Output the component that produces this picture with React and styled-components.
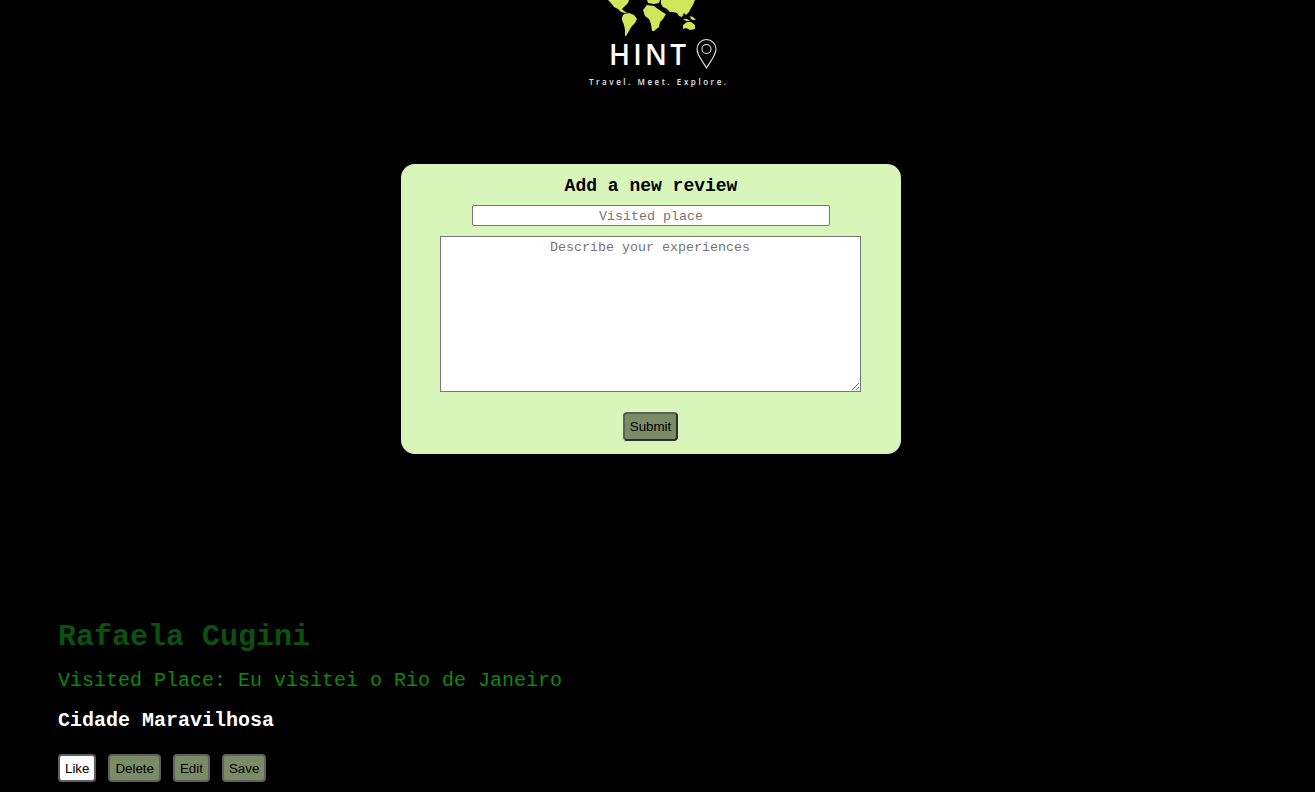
import React from 'react'
import styled, { createGlobalStyle } from 'styled-components'

const GlobalStyle = createGlobalStyle`
  html, body {
    margin: 0;
    background: #000;
    overflow: hidden;
  }
`

const MONO = '"Liberation Mono", monospace'
const SANS = '"Liberation Sans", Arial, sans-serif'

const Logo = () => (
  <LogoSvg viewBox="0 0 150 92" width="150" height="92" aria-label="Hint logo">
    <g fill="#cfe55c">
      {/* north america */}
      <path d="M25 0L46 0 45 3 42 6 39 9 41 11 44 13 42 13 38 12 35 9 31 7 28 3z" />
      {/* south america */}
      <path d="M41 14L46 13 51 15 54 19 52 23 49 26 46 31 43 36 42 36 42 30 41 25 39 20 39 17z" />
      {/* africa */}
      <path d="M60 10L64 5 71 6 75 9 81 13 83 14 80 19 77 22 76 27 71 31 69 31 68 24 66 19 62 16z" />
      {/* europe */}
      <path d="M64 0L77 0 76 3 71 4 65 3z" />
      {/* asia */}
      <path d="M78 0L112 0 110 5 108 8 106 12 103 15 101 13 99 17 96 16 94 13 90 12 87 12 84 9 80 7 78 4z" />
      {/* islands */}
      <path d="M100 19l4 0 3 2-4 0zM107 16l3 1 3 3-3 0-2-1z" />
      {/* australia */}
      <path d="M100 25L104 22 108 22 112 25 112 29 107 30 103 28 100 29z" />
    </g>
    <LogoWord x="26" y="64.5" textLength="77" lengthAdjust="spacing">HINT</LogoWord>
    <g fill="none" stroke="#e6e6e6" strokeWidth="1.1">
      <path d="M123.5 68c-3-6-9.5-12-9.5-19a9.5 9.5 0 0 1 19 0c0 7-6.5 13-9.5 19z" />
      <circle cx="123.5" cy="49" r="4.5" />
    </g>
    <LogoTag x="6" y="85" textLength="137" lengthAdjust="spacing">Travel. Meet. Explore.</LogoTag>
  </LogoSvg>
)

const App = () => (
  <Page>
    <GlobalStyle />
    <Header>
      <Logo />
    </Header>
    <ReviewForm onSubmit={(e) => e.preventDefault()}>
      <FormTitle>Add a new review</FormTitle>
      <PlaceInput type="text" placeholder="Visited place" />
      <ExperienceInput placeholder="Describe your experiences" />
      <Button type="submit" $shadow>Submit</Button>
    </ReviewForm>
    <Review>
      <Author>Rafaela Cugini</Author>
      <Place>Visited Place: Eu visitei o Rio de Janeiro</Place>
      <Body>Cidade Maravilhosa</Body>
      <Actions>
        <Button type="button" $active>Like</Button>
        <Button type="button">Delete</Button>
        <Button type="button">Edit</Button>
        <Button type="button">Save</Button>
      </Actions>
    </Review>
  </Page>
)

const Page = styled.div`
  min-height: 792px;
  background: #000;
  font-family: ${MONO};
`

const Header = styled.header`
  display: flex;
  justify-content: center;
  height: 92px;
  padding-left: 1px;
`

const LogoSvg = styled.svg`
  display: block;
`

const LogoWord = styled.text`
  font-family: "Open Sans", sans-serif;
  font-size: 28px;
  font-weight: 600;
  fill: #fff;
`

const LogoTag = styled.text`
  font-family: "Open Sans", sans-serif;
  font-size: 8px;
  font-weight: 600;
  fill: #e8e8e8;
`

const ReviewForm = styled.form`
  box-sizing: border-box;
  width: 500px;
  height: 290px;
  margin: 72px 0 0 401px;
  padding-top: 12px;
  display: flex;
  flex-direction: column;
  align-items: center;
  background: #d8f6ba;
  border-radius: 14px;
`

const FormTitle = styled.h2`
  margin: 0 0 8px;
  font-size: 18px;
  line-height: 21px;
  font-weight: 700;
  color: #000;
`

const fieldStyles = `
  box-sizing: border-box;
  font-family: ${MONO};
  font-size: 13.33px;
  text-align: center;
  background: #fff;
  border: 1px solid #767676;
  color: #000;
  &::placeholder {
    color: #757575;
  }
`

const PlaceInput = styled.input`
  ${fieldStyles}
  width: 358px;
  height: 21px;
  padding: 2px 2px 0;
  border-radius: 2px;
`

const ExperienceInput = styled.textarea`
  ${fieldStyles}
  display: block;
  width: 421px;
  height: 156px;
  margin: 10px 2px 0 0;
  padding: 3px 2px 1px;
  border-radius: 0;
`

const Button = styled.button`
  box-sizing: border-box;
  height: ${(p) => (p.$shadow ? '29px' : '28px')};
  padding: 0 5px;
  font-family: ${SANS};
  font-size: 13.33px;
  color: #000;
  background: ${(p) => (p.$active ? '#fff' : '#7a8c66')};
  border: 2px solid #5f5f5f;
  border-right-color: ${(p) => (p.$shadow ? '#2e2e2e' : '#5f5f5f')};
  border-bottom-color: ${(p) => (p.$shadow ? '#2e2e2e' : '#5f5f5f')};
  border-radius: 4px;
  margin: ${(p) => (p.$shadow ? '20px 1px 0 0' : '0')};
`

const Review = styled.section`
  margin: 166px 0 0 58px;
`

const Author = styled.h1`
  margin: 0;
  font-size: 30px;
  line-height: 34px;
  font-weight: 700;
  color: #0b5110;
`

const Place = styled.h3`
  margin: 15px 0 0;
  font-size: 20px;
  line-height: 23px;
  font-weight: 400;
  color: #0a8a0a;
`

const Body = styled.p`
  margin: 17px 0 0;
  font-size: 20px;
  line-height: 23px;
  font-weight: 700;
  color: #fff;
`

const Actions = styled.div`
  display: flex;
  gap: 12px;
  margin-top: 22px;
`

export default App
